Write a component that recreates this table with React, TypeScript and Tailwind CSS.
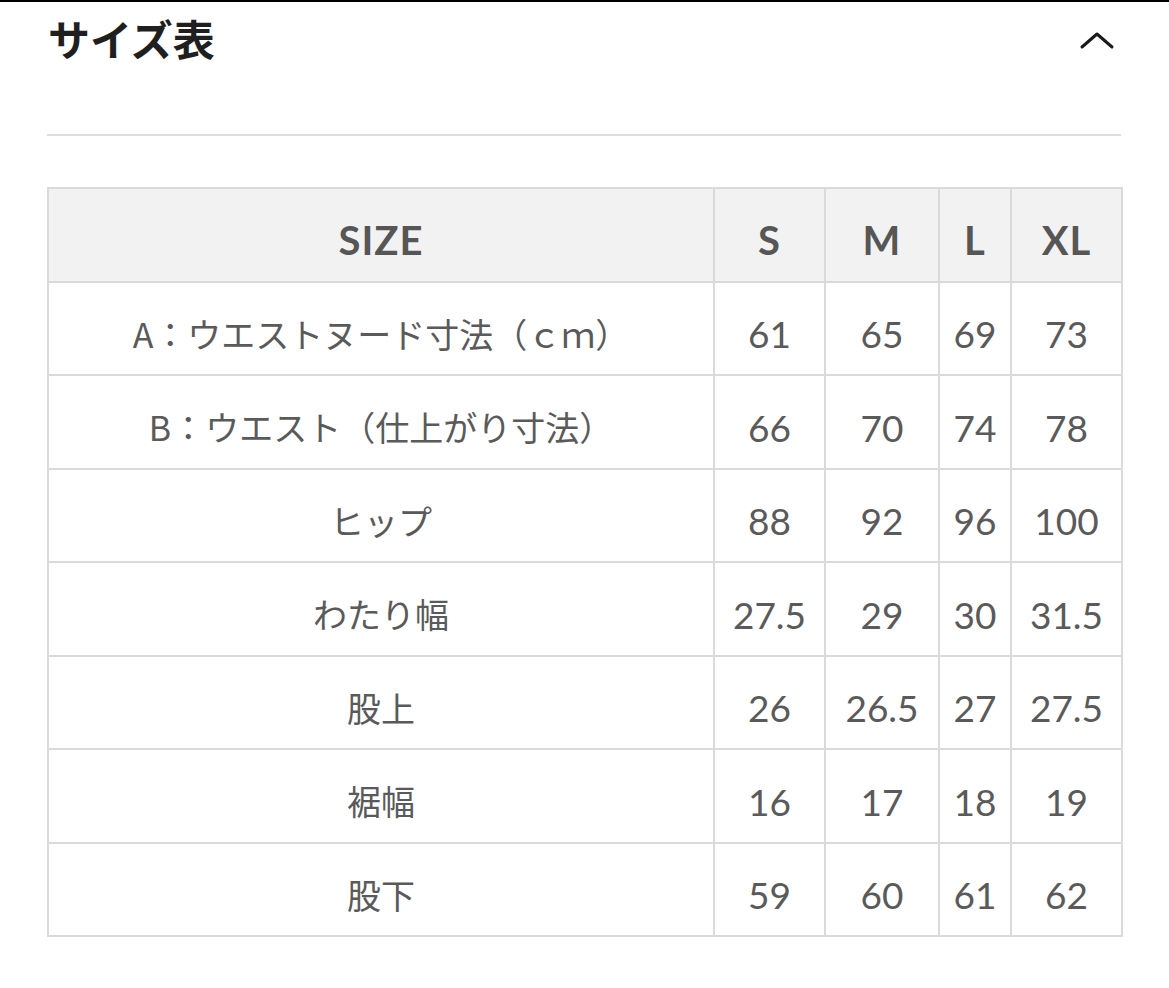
import React from "react";

const rows: [string, string[]][] = [
  ["A：ウエストヌード寸法（ｃｍ）", ["61", "65", "69", "73"]],
  ["B：ウエスト（仕上がり寸法）", ["66", "70", "74", "78"]],
  ["ヒップ", ["88", "92", "96", "100"]],
  ["わたり幅", ["27.5", "29", "30", "31.5"]],
  ["股上", ["26", "26.5", "27", "27.5"]],
  ["裾幅", ["16", "17", "18", "19"]],
  ["股下", ["59", "60", "61", "62"]],
];

const sizes = ["S", "M", "L", "XL"];

export default function App() {
  return (
    <div className="w-[1169px] h-[988px] bg-white overflow-hidden">
      {/* top edge */}
      <div className="h-[2px] bg-black"></div>

      <div className="px-[47px]">
        {/* heading */}
        <div className="h-[132px] flex items-start justify-between pt-[15px]">
          <h2 className="text-[42px] leading-[42px] font-bold text-[#1f1f1f] pl-[1px] [font-family:'Noto_Sans_CJK_JP',sans-serif]">
            サイズ表
          </h2>
          <svg width="36" height="20" viewBox="0 0 36 20" className="mt-[14px] mr-[7px]" fill="none">
            <polyline points="3,16 18,3 33,16" stroke="#1a1a1a" strokeWidth="3" strokeLinecap="round" strokeLinejoin="round" />
          </svg>
        </div>

        <div className="h-[2px] bg-[#dedede] mr-[1px]"></div>

        {/* table */}
        <div className="mt-[51px] grid grid-cols-[664px_109px_112px_70px_109px] gap-[2px] p-[2px] bg-[#dadada] w-[1076px]">
          <div className="h-[91.5px] pt-[11px] bg-[#f2f2f2] flex items-center justify-center text-[40px] font-bold text-[#565656] tracking-[1px] [font-family:Lato,sans-serif]">
            SIZE
          </div>
          {sizes.map((s) => (
            <div key={s} className="h-[91.5px] pt-[11px] bg-[#f2f2f2] flex items-center justify-center text-[40px] font-bold text-[#565656] tracking-[1px] [font-family:Lato,sans-serif]">
              {s}
            </div>
          ))}

          {rows.map(([label, vals]) => (
            <React.Fragment key={label}>
              <div className="h-[91.5px] pt-[10px] bg-white flex items-center justify-center text-[34px] text-[#5a5a5a] [font-family:'Noto_Sans_CJK_JP',sans-serif]">
                {label}
              </div>
              {vals.map((v, i) => (
                <div key={i} className="h-[91.5px] pt-[11px] bg-white flex items-center justify-center text-[37px] text-[#5a5a5a] [font-family:Lato,sans-serif]">
                  {v}
                </div>
              ))}
            </React.Fragment>
          ))}
        </div>
      </div>
    </div>
  );
}
